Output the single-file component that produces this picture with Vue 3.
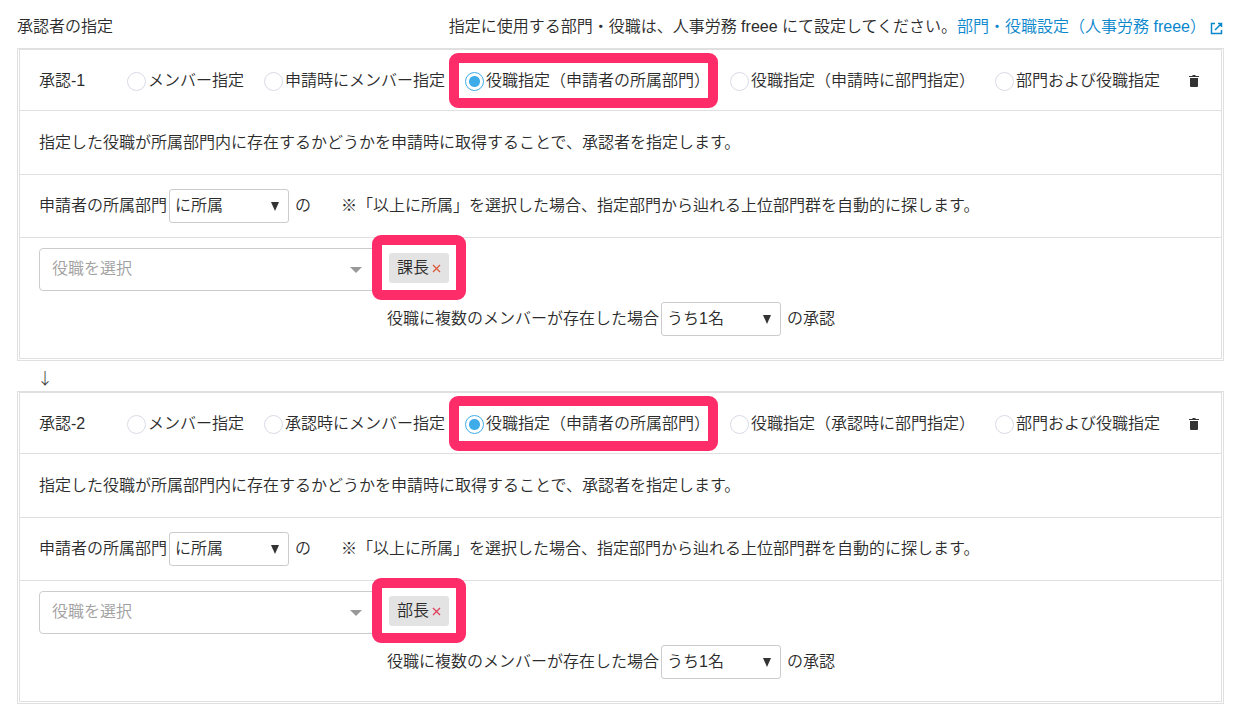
<script setup>
import { reactive } from 'vue'

const steps = reactive([
  { id: 1, timing: '申請時', mode: 'position', scope: 'に所属', role: '課長', tone: 'orange', count: 'うち1名' },
  { id: 2, timing: '承認時', mode: 'position', scope: 'に所属', role: '部長', tone: 'rose', count: 'うち1名' }
])

const modes = (step) => [
  { value: 'member', label: 'メンバー指定' },
  { value: 'member-later', label: `${step.timing}にメンバー指定` },
  { value: 'position', label: '役職指定（申請者の所属部門）' },
  { value: 'position-later', label: `役職指定（${step.timing}に部門指定）` },
  { value: 'both', label: '部門および役職指定' }
]
</script>

<template>
  <main class="page">
    <header class="head">
      <h1 class="title">承認者の指定</h1>
      <p class="guide">
        指定に使用する部門・役職は、人事労務 freee にて設定してください。<a href="#" class="link">部門・役職設定（人事労務 freee）<svg class="external" viewBox="0 0 13 13" aria-hidden="true"><path d="M5 1.5H1.5v10h10V8M8 1.5h3.5V5M11.5 1.5L5 8" /></svg></a>
      </p>
    </header>

    <template v-for="(step, i) in steps" :key="step.id">
      <div v-if="i > 0" class="arrow">↓</div>
      <section class="panel" :aria-label="`承認-${step.id}`">
        <div class="row modes">
          <h2 class="step">承認-{{ step.id }}</h2>
          <div class="options" role="radiogroup" :aria-label="`承認-${step.id}`">
            <label v-for="m in modes(step)" :key="m.value" class="option" :class="{ marked: m.value === 'position' }">
              <input v-model="step.mode" type="radio" class="radio" :name="`mode-${step.id}`" :value="m.value">
              <span>{{ m.label }}</span>
            </label>
          </div>
          <button type="button" class="trash" aria-label="削除">
            <svg viewBox="0 0 10 12" aria-hidden="true"><path d="M0 1h3l1-1h2l1 1h3v1H0zM1 3h8v8q0 1-1 1H2q-1 0-1-1z" /></svg>
          </button>
        </div>

        <p class="row description">指定した役職が所属部門内に存在するかどうかを申請時に取得することで、承認者を指定します。</p>

        <div class="row scope">
          <label :for="`scope-${step.id}`">申請者の所属部門</label>
          <span class="select">
            <select :id="`scope-${step.id}`" v-model="step.scope">
              <option>に所属</option>
              <option>以上に所属</option>
            </select>
            <svg class="caret" viewBox="0 0 8 9" aria-hidden="true"><path d="M0 0h8L4 9z" /></svg>
          </span>
          <span class="particle">の</span>
          <span class="note">※「以上に所属」を選択した場合、指定部門から辿れる上位部門群を自動的に探します。</span>
        </div>

        <div class="roles">
          <div class="combo">
            <input type="text" placeholder="役職を選択" aria-label="役職を選択">
            <svg class="combo-caret" viewBox="0 0 12 6" aria-hidden="true"><path d="M0 0h12L6 6z" /></svg>
          </div>
          <div class="chosen">
            <div class="chip marked">
              <span>{{ step.role }}</span>
              <button type="button" class="remove" :aria-label="`${step.role}を外す`">
                <svg :class="step.tone" viewBox="0 0 7 7" aria-hidden="true"><path d="M0 0L7 7M7 0L0 7" /></svg>
              </button>
            </div>
            <div class="count">
              <label :for="`count-${step.id}`">役職に複数のメンバーが存在した場合</label>
              <span class="select">
                <select :id="`count-${step.id}`" v-model="step.count">
                  <option>うち1名</option>
                  <option>全員</option>
                </select>
                <svg class="caret" viewBox="0 0 8 9" aria-hidden="true"><path d="M0 0h8L4 9z" /></svg>
              </span>
              <span class="particle">の承認</span>
            </div>
          </div>
        </div>
      </section>
    </template>
  </main>
</template>

<style>
body {
  background: #fff;
}
</style>

<style scoped>
.page,
.page * {
  box-sizing: border-box;
}

.page {
  padding: 0 19px 14px 17px;
  color: #2b2b2b;
  font-family: "Liberation Sans", "Noto Sans CJK JP", sans-serif;
  font-size: 16px;
  font-weight: 350;
  line-height: 24px;
  white-space: nowrap;
}

input,
select,
button {
  margin: 0;
  padding: 0;
  color: inherit;
  font: inherit;
}

button {
  border: 0;
  background: none;
  cursor: pointer;
}

h1,
h2,
p {
  margin: 0;
  font: inherit;
}

.head {
  display: flex;
  justify-content: space-between;
  padding: 15px 1px 9px 0;
}

.link {
  color: #0a87cc;
  text-decoration: none;
}

.external {
  width: 13px;
  height: 13px;
  margin-left: 4px;
  vertical-align: -3px;
  fill: none;
  stroke: currentColor;
  stroke-width: 1.5;
}

.panel {
  border: 3px double #e0e0e0;
  border-top: 2px solid #e0e0e0;
}

.row {
  display: flex;
  align-items: center;
  padding: 0 22px 0 19px;
  border-bottom: 1px solid #e0e0e0;
}

.modes {
  height: 61px;
  padding-top: 2px;
}

.step {
  flex: 0 0 88px;
}

.options {
  display: flex;
  gap: 20px;
}

.option {
  display: flex;
  align-items: center;
  gap: 2px;
}

.radio {
  appearance: none;
  width: 19px;
  height: 19px;
  border: 1px solid #d9dbe6;
  border-radius: 50%;
  background: #fff;
}

.radio:checked {
  border-color: #3dace8;
  background: radial-gradient(circle, #3dace8 5px, #fff 6px);
}

.marked {
  position: relative;
}

.marked::after {
  content: "";
  position: absolute;
  inset: -16px -8px -15px -16px;
  border: 10px solid #ff2c6a;
  border-radius: 9px;
  pointer-events: none;
}

.trash {
  width: 10px;
  height: 12px;
  margin-left: auto;
}

.trash svg {
  display: block;
  width: 10px;
  height: 12px;
  fill: #333;
}

.description {
  height: 64px;
}

.scope {
  height: 63px;
}

.select {
  display: grid;
  align-items: center;
  width: 120px;
  margin-left: 2px;
}

.select select {
  grid-area: 1 / 1;
  appearance: none;
  width: 100%;
  height: 34px;
  padding: 0 24px 0 5px;
  border: 1px solid #ccc;
  border-radius: 3px;
  background: #fff;
}

.caret {
  grid-area: 1 / 1;
  justify-self: end;
  width: 8px;
  height: 9px;
  margin-right: 10px;
  fill: #333;
  pointer-events: none;
}

.particle {
  margin-left: 6px;
}

.note {
  margin-left: 30px;
}

.roles {
  display: flex;
  align-items: flex-start;
  padding: 10px 22px 22px 19px;
}

.combo {
  display: grid;
  align-items: center;
  width: 340px;
}

.combo input {
  grid-area: 1 / 1;
  width: 100%;
  height: 43px;
  padding: 0 36px 2px 12px;
  border: 1px solid #ccc;
  border-radius: 4px;
  background: #fff;
}

.combo input::placeholder {
  color: #a0a0a0;
  opacity: 1;
}

.combo-caret {
  grid-area: 1 / 1;
  justify-self: end;
  width: 12px;
  height: 6px;
  margin-right: 17px;
  fill: #999;
  pointer-events: none;
}

.chosen {
  padding: 5px 0 0 8px;
}

.chip {
  display: flex;
  align-items: center;
  gap: 4px;
  width: 60px;
  height: 30px;
  margin-left: 2px;
  padding: 0 8px;
  border-radius: 3px;
  background: #e3e3e3;
}

.chip.marked::after {
  inset: -18px -17px -17px;
}

.remove {
  flex: none;
  width: 7px;
  height: 7px;
}

.remove svg {
  display: block;
  width: 7px;
  height: 7px;
  overflow: visible;
  stroke-width: 1.3;
  fill: none;
}

.orange {
  stroke: #dc5a3c;
}

.rose {
  stroke: #e0405c;
}

.count {
  display: flex;
  align-items: center;
  margin-top: 19px;
}

.arrow {
  height: 30px;
  padding: 4px 20px 0;
  font-family: "Noto Sans CJK JP", sans-serif;
  font-weight: 300;
}
</style>
